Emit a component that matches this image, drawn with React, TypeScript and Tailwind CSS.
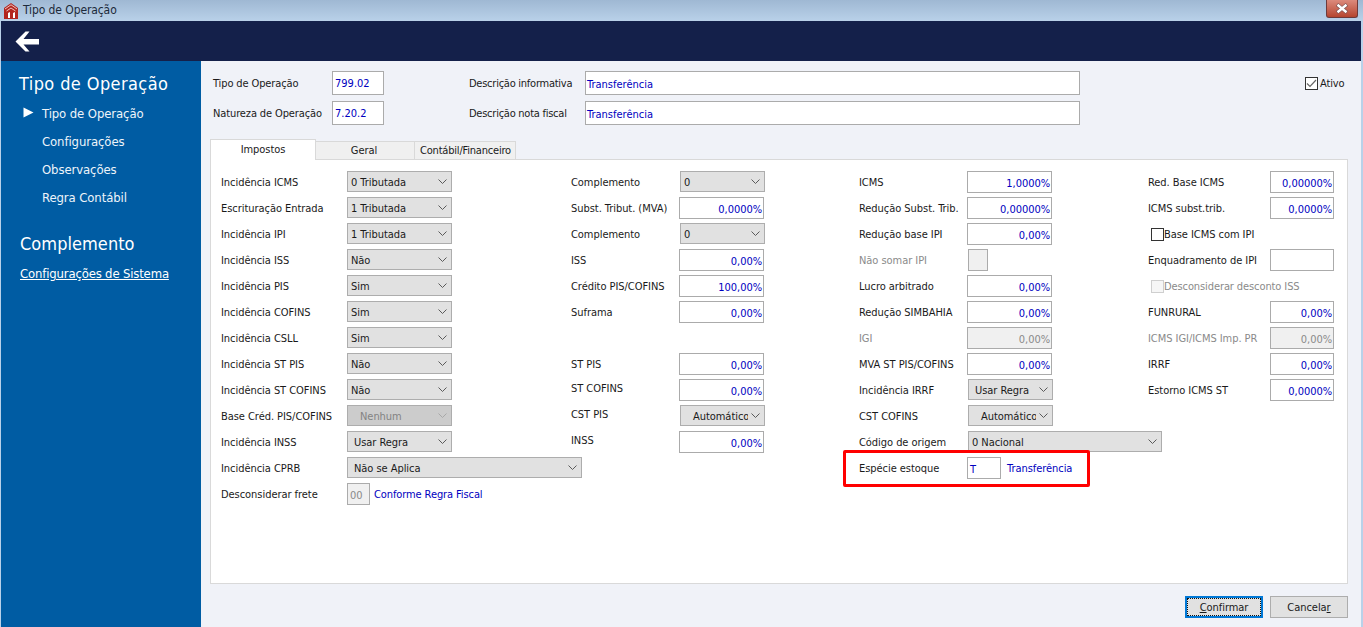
import React from "react";

const Chevron = ({ c = "#5a5a5a" }: { c?: string }) => (
  <svg width="9" height="5" viewBox="0 0 9 5" className="shrink-0">
    <path d="M0.5 0.5 L4.5 4.5 L8.5 0.5" fill="none" stroke={c} strokeWidth="1" />
  </svg>
);

const Sel = ({ t, w = "w-[105px]", pl = "pl-[3px]", off = false, ml = "" }: { t: string; w?: string; pl?: string; off?: boolean; ml?: string }) => (
  <div className={`${w} ${ml} h-[21px] self-start mt-[2px] shrink-0 flex items-center justify-between border border-[#adadad] pr-[4px] ${off ? "bg-[#cccccc] text-[#838383]" : "bg-[#e1e1e1] text-[#1a1a1a]"}`}>
    <span className={`${pl} pt-px overflow-hidden whitespace-nowrap flex-1 min-w-0 mr-[3px]`}>{t}</span>
    <Chevron c={off ? "#a8a8a8" : "#5a5a5a"} />
  </div>
);

const Inp = ({ t, w = "w-[85px]", off = false }: { t: string; w?: string; off?: boolean }) => (
  <div className={`${w} h-[22px] self-start mt-[2px] shrink-0 flex items-center justify-end border border-[#ababab] pr-[1px] pt-[2px] ${off ? "bg-[#f0f0f0] text-[#8a8a8a]" : "bg-white text-[#0000c0]"}`}>
    {t}
  </div>
);

const Row = ({ label, lw, up = "", off = false, children }: { label?: string; lw: string; up?: string; off?: boolean; children?: React.ReactNode }) => (
  <div className="h-[26px] flex items-center">
    <div className={`${lw} ${up} shrink-0 whitespace-nowrap ${off ? "text-[#8a8a8a]" : "text-[#1a1a1a]"}`}>{label}</div>
    {children}
  </div>
);

const Box = ({ checked = false, off = false }: { checked?: boolean; off?: boolean }) => (
  <div className={`w-[13px] h-[13px] shrink-0 border flex items-center justify-center ${off ? "border-[#cfcfcf] bg-[#f6f6f6]" : "border-[#333333] bg-white"}`}>
    {checked && (
      <svg width="11" height="9" viewBox="0 0 11 9">
        <path d="M1 4.5 L4 7.5 L10 1" fill="none" stroke="#666666" strokeWidth="1.2" />
      </svg>
    )}
  </div>
);

const colA: [string, string][] = [
  ["Incidência ICMS", "0 Tributada"],
  ["Escrituração Entrada", "1 Tributada"],
  ["Incidência IPI", "1 Tributada"],
  ["Incidência ISS", "Não"],
  ["Incidência PIS", "Sim"],
  ["Incidência COFINS", "Sim"],
  ["Incidência CSLL", "Sim"],
  ["Incidência ST PIS", "Não"],
  ["Incidência ST COFINS", "Não"],
];

const Logo = () => (
  <svg width="14" height="16" viewBox="0 0 14 16" className="shrink-0">
    <path d="M0 5 L7 0 L14 5 L14 16 L0 16 Z" fill="#b3261f" />
    <path d="M1 6 L7 1.8 L13 6 M2.5 8 L7 5 L11.5 8" fill="none" stroke="#f4d6d0" strokeWidth="0.9" />
    <path d="M4 10 L6 9 L6 15 L4 15 Z M9 10 L11 9 L11 15 L9 15 Z" fill="#ffffff" />
  </svg>
);

export default function App() {
  const a = "w-[126px]";
  const b = "w-[108px]";
  const c = "w-[108px]";
  const d = "w-[122px]";
  return (
    <div className="w-[1363px] h-[627px] overflow-hidden flex flex-col bg-[#b9d1e9] text-[11px] leading-[13px] tracking-[-0.05px] [font-family:'DejaVu_Sans',sans-serif] [font-stretch:condensed]">
      {/* title bar */}
      <div className="h-[21px] shrink-0 flex items-center pl-[4px] pr-[5px] bg-gradient-to-b from-[#9fb8d3] to-[#b9d1e9] text-[#1c2a3a]">
        <Logo />
        <span className="ml-[5px] text-[12px] mb-[1px] tracking-[-0.1px]">Tipo de Operação</span>
        <div className="ml-auto self-start w-[32px] h-[18px] rounded-b-[3px] border border-[#6e3a3a] border-t-0 bg-gradient-to-b from-[#dc8a7c] to-[#b5452f] flex items-center justify-center">
          <svg width="14" height="11" viewBox="0 0 14 11">
            <path d="M2 1.5 L12 9.5 M12 1.5 L2 9.5" stroke="#7a5050" strokeWidth="3.6" />
            <path d="M2.5 1.8 L11.5 9.2 M11.5 1.8 L2.5 9.2" stroke="#ffffff" strokeWidth="2.4" />
          </svg>
        </div>
      </div>
      <div className="flex-1 min-h-0 flex flex-col ml-[1px] mr-[2px]">
        {/* navy bar */}
        <div className="h-[40px] shrink-0 bg-[#14204a] flex items-center pl-[14px]">
          <svg width="25" height="21" viewBox="0 0 25 21">
            <path d="M0.5 10.5 L10.5 0.5 L14.5 0.5 L8.5 8 L24 8 L24 13.5 L8.5 13.5 L14.5 20.5 L10.5 20.5 Z" fill="#ffffff" />
          </svg>
        </div>
        <div className="flex-1 min-h-0 flex">
          {/* sidebar */}
          <aside className="w-[200px] shrink-0 bg-[#005ca3] text-white pl-[18px] pt-[12px]">
            <div className="text-[18px] leading-[22px] tracking-[0.4px]">Tipo de Operação</div>
            <div className="mt-[5px] text-[13px] leading-[28px] tracking-[-0.1px] text-[#eef4fa]">
              <div className="flex items-center">
                <svg width="11" height="11" viewBox="0 0 11 11" className="ml-[4px] mb-[3px]">
                  <path d="M0.5 0.5 L10.5 5.5 L0.5 10.5 Z" fill="#ffffff" />
                </svg>
                <span className="ml-[8px]">Tipo de Operação</span>
              </div>
              <div className="pl-[23px]">Configurações</div>
              <div className="pl-[23px]">Observações</div>
              <div className="pl-[23px]">Regra Contábil</div>
            </div>
            <div className="mt-[21px] pl-[1px] text-[18px] leading-[22px] tracking-[0.05px]">Complemento</div>
            <div className="mt-[11px] pl-[1px] text-[13px] leading-[16px] tracking-[-0.17px] underline">Configurações de Sistema</div>
          </aside>
          {/* main */}
          <main className="flex-1 min-w-0 bg-[#f0f2f8] flex flex-col pl-[9px] pr-[13px]">
            <div className="h-[78px] shrink-0 flex pl-[3px] pt-[10px] text-[#1a1a1a] tracking-[-0.12px]">
              <div className="w-[256px] shrink-0 flex flex-col gap-[6px]">
                <div className="flex items-center">
                  <span className="w-[119px]">Tipo de Operação</span>
                  <div className="w-[52px] h-[24px] border border-[#ababab] bg-white text-[#0000c0] flex items-center pl-[2px] pt-[1px] tracking-normal">799.02</div>
                </div>
                <div className="flex items-center">
                  <span className="w-[119px]">Natureza de Operação</span>
                  <div className="w-[52px] h-[24px] border border-[#ababab] bg-white text-[#0000c0] flex items-center pl-[2px] pt-[1px] tracking-normal">7.20.2</div>
                </div>
              </div>
              <div className="w-[611px] shrink-0 flex flex-col gap-[6px]">
                <div className="flex items-center">
                  <span className="w-[116px] tracking-[-0.25px]">Descrição informativa</span>
                  <div className="w-[495px] h-[24px] border border-[#ababab] bg-white text-[#0000c0] flex items-center pl-[1px] pt-[3px] tracking-normal">Transferência</div>
                </div>
                <div className="flex items-center">
                  <span className="w-[116px] tracking-[-0.25px]">Descrição nota fiscal</span>
                  <div className="w-[495px] h-[24px] border border-[#ababab] bg-white text-[#0000c0] flex items-center pl-[1px] pt-[2px] tracking-normal">Transferência</div>
                </div>
              </div>
              <div className="ml-[225px] h-[24px] flex items-center gap-[2px]">
                <Box checked />
                <span>Ativo</span>
              </div>
            </div>
            {/* tabs */}
            <div className="h-[21px] shrink-0 flex items-end relative z-10 text-[#1a1a1a]">
              <div className="w-[106px] h-[21px] border border-b-0 border-[#d9d9d9] bg-white flex items-center justify-center pb-[1px]">Impostos</div>
              <div className="w-[99px] h-[19px] border-y border-r border-[#d9d9d9] bg-[#f0f0f0] flex items-center justify-center pr-[2px]">Geral</div>
              <div className="w-[101px] h-[19px] border-y border-r border-[#d9d9d9] bg-[#f0f0f0] flex items-center justify-center pl-[1px] tracking-[-0.2px]">Contábil/Financeiro</div>
            </div>
            {/* panel */}
            <div className="relative h-[425px] shrink-0 -mt-px border border-[#d9d9d9] bg-white pl-[10px] pt-[9px] grid grid-cols-[350px_288px_289px_1fr] content-start">
              <div>
                {colA.map(([l, v]) => (
                  <Row key={l} label={l} lw={a}><Sel t={v} /></Row>
                ))}
                <Row label="Base Créd. PIS/COFINS" lw={a}><Sel t="Nenhum" pl="pl-[12px]" off /></Row>
                <Row label="Incidência INSS" lw={a}><Sel t="Usar Regra" pl="pl-[6px]" /></Row>
                <Row label="Incidência CPRB" lw={a}><Sel t="Não se Aplica" w="w-[235px]" pl="pl-[6px]" /></Row>
                <Row label="Desconsiderar frete" lw={a}>
                  <div className="w-[23px] h-[22px] self-start mt-[2px] shrink-0 border border-[#ababab] bg-[#f0f0f0] text-[#8a8a8a] flex items-center pl-[2px] pt-[2px]">00</div>
                  <span className="ml-[4px] text-[#0000c0] whitespace-nowrap tracking-[-0.1px]">Conforme Regra Fiscal</span>
                </Row>
              </div>
              <div>
                <Row label="Complemento" lw={b}><Sel t="0" w="w-[85px]" ml="ml-[1px]" /></Row>
                <Row label="Subst. Tribut. (MVA)" lw={b}><Inp t="0,0000%" /></Row>
                <Row label="Complemento" lw={b}><Sel t="0" w="w-[85px]" ml="ml-[1px]" /></Row>
                <Row label="ISS" lw={b}><Inp t="0,00%" /></Row>
                <Row label="Crédito PIS/COFINS" lw={b}><Inp t="100,00%" /></Row>
                <Row label="Suframa" lw={b}><Inp t="0,00%" /></Row>
                <Row lw={b} />
                <Row label="ST PIS" lw={b}><Inp t="0,00%" /></Row>
                <Row label="ST COFINS" lw={b} up="pb-[4px]"><Inp t="0,00%" /></Row>
                <Row label="CST PIS" lw={b} up="pb-[4px]"><Sel t="Automático" w="w-[85px]" pl="pl-[12px]" ml="ml-[1px]" /></Row>
                <Row label="INSS" lw={b} up="pb-[4px]"><Inp t="0,00%" /></Row>
              </div>
              <div>
                <Row label="ICMS" lw={c}><Inp t="1,0000%" /></Row>
                <Row label="Redução Subst. Trib." lw={c}><Inp t="0,00000%" /></Row>
                <Row label="Redução base IPI" lw={c}><Inp t="0,00%" /></Row>
                <Row label="Não somar IPI" lw={c} off>
                  <div className="w-[20px] h-[22px] self-start mt-[2px] ml-[1px] border border-[#ababab] bg-[#f0f0f0]" />
                </Row>
                <Row label="Lucro arbitrado" lw={c}><Inp t="0,00%" /></Row>
                <Row label="Redução SIMBAHIA" lw={c}><Inp t="0,00%" /></Row>
                <Row label="IGI" lw={c} off><Inp t="0,00%" off /></Row>
                <Row label="MVA ST PIS/COFINS" lw={c}><Inp t="0,00%" /></Row>
                <Row label="Incidência IRRF" lw={c}><Sel t="Usar Regra" w="w-[85px]" pl="pl-[6px]" ml="ml-[1px]" /></Row>
                <Row label="CST COFINS" lw={c}><Sel t="Automático" w="w-[85px]" pl="pl-[12px]" ml="ml-[1px]" /></Row>
                <Row label="Código de origem" lw={c}><Sel t="0 Nacional" w="w-[194px]" ml="ml-[1px]" /></Row>
                <Row label="Espécie estoque" lw={c}>
                  <div className="w-[34px] h-[22px] self-start mt-[2px] shrink-0 border border-[#ababab] bg-white text-[#0000c0] flex items-center pl-[2px] pt-[2px]">T</div>
                  <span className="ml-[6px] text-[#0000c0]">Transferência</span>
                </Row>
              </div>
              <div>
                <Row label="Red. Base ICMS" lw={d}><Inp t="0,00000%" w="w-[64px]" /></Row>
                <Row label="ICMS subst.trib." lw={d}><Inp t="0,0000%" w="w-[64px]" /></Row>
                <Row lw="w-[3px]">
                  <div className="flex items-center"><Box /><span className="text-[#1a1a1a]">Base ICMS com IPI</span></div>
                </Row>
                <Row label="Enquadramento de IPI" lw={d}><Inp t="" w="w-[64px]" /></Row>
                <Row lw="w-[3px]">
                  <div className="flex items-center text-[#8a8a8a] tracking-[-0.1px]"><Box off /><span>Desconsiderar desconto ISS</span></div>
                </Row>
                <Row label="FUNRURAL" lw={d}><Inp t="0,00%" w="w-[64px]" /></Row>
                <Row label="ICMS IGI/ICMS Imp. PR" lw={d} off><Inp t="0,00%" w="w-[64px]" off /></Row>
                <Row label="IRRF" lw={d}><Inp t="0,00%" w="w-[64px]" /></Row>
                <Row label="Estorno ICMS ST" lw={d}><Inp t="0,0000%" w="w-[64px]" /></Row>
              </div>
              {/* red highlight */}
              <div className="absolute left-[632px] top-[290px] w-[247px] h-[37px] border-[3px] border-[#ff0000] rounded-[2px]" />
            </div>
            {/* buttons */}
            <div className="flex justify-end gap-[7px] mt-[12px] text-[#1a1a1a]">
              <div className="w-[78px] h-[22px] border-2 border-[#0078d7] bg-[#e1e1e1] flex items-center justify-center outline-1 outline-dotted -outline-offset-3 outline-[#111111]">
                <span><span className="underline">C</span>onfirmar</span>
              </div>
              <div className="w-[78px] h-[22px] border border-[#adadad] bg-[#e1e1e1] flex items-center justify-center">
                <span>Cancela<span className="underline">r</span></span>
              </div>
            </div>
          </main>
        </div>
      </div>
    </div>
  );
}
